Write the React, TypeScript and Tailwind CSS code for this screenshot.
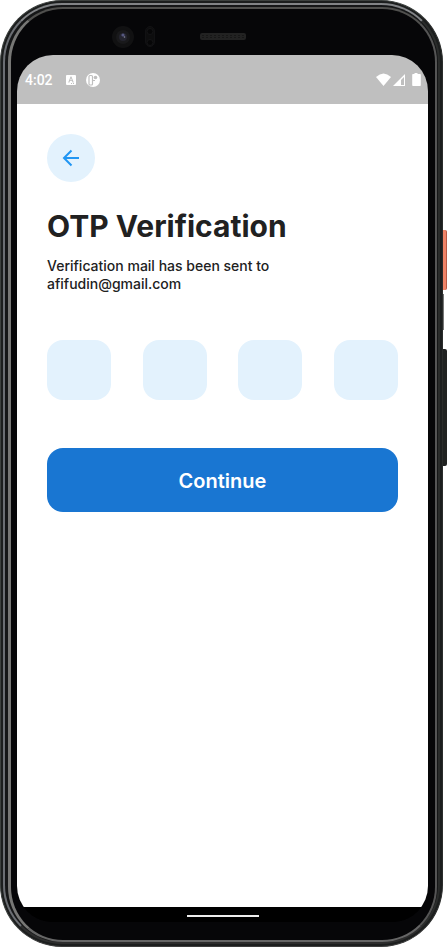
import React from "react";

function Camera() {
  return (
    <svg className="h-6 w-12" viewBox="0 0 48 24" fill="none" aria-hidden="true">
      <circle cx="12" cy="12" r="11" fill="#111112" />
      <circle cx="12" cy="12" r="7" fill="#19191b" />
      <circle cx="12" cy="12" r="4" fill="#25252f" />
      <circle cx="12" cy="10" r="1.6" fill="#55577f" />
      <circle cx="13.500" cy="12" r="0.8" fill="#8b8ca0" />
      <rect x="34.500" y="1.500" width="9" height="20" rx="4.500" fill="#0d0d0e" stroke="#111113" />
      <circle cx="39" cy="6.500" r="3" fill="#060607" stroke="#141416" />
      <circle cx="39" cy="17.500" r="3" fill="#060607" stroke="#141416" />
    </svg>
  );
}

function Speaker() {
  return (
    <svg className="h-[7px] w-[46px]" viewBox="0 0 46 7" aria-hidden="true">
      <rect width="46" height="7" rx="2" fill="#222" />
      <path d="M2 2.500H44M2 4.500H44" stroke="#171717" strokeDasharray="2 2" />
    </svg>
  );
}

function StatusBar() {
  return (
    <div className="flex h-[49px] shrink-0 items-center bg-[#bfbfbf] pr-[7px] pl-2 text-white">
      <span className="font-[Roboto,sans-serif] text-sm font-medium">4:02</span>
      <svg className="ml-3 h-4 w-[38px]" viewBox="0 0 38 16" aria-hidden="true">
        <path
          fill="white"
          fillRule="evenodd"
          d="M2 3h8a1 1 0 0 1 1 1v8a1 1 0 0 1-1 1H2a1 1 0 0 1-1-1V4a1 1 0 0 1 1-1ZM5.600 4.500 3.200 10.500h1.200l.5-1.400h2.200l.5 1.400h1.200L6.400 4.500ZM6 6l.8 2.200H5.200Z"
        />
        <path d="M6 11.500h4" stroke="#bfbfbf" strokeDasharray="1 1" />
        <circle cx="28" cy="8" r="7" fill="white" />
        <rect x="24" y="3.500" width="3.500" height="9.500" rx="1" fill="none" stroke="#bfbfbf" strokeWidth="1.200" />
        <circle cx="30.500" cy="5.500" r="1.800" fill="#bfbfbf" />
        <path d="M28 8.500h2" stroke="#bfbfbf" />
      </svg>
      <svg className="ml-auto h-4 w-[46px]" viewBox="0 0 46 16" fill="white" aria-hidden="true">
        <path d="M1 5Q8.500-2 16 5L8.500 14Z" />
        <path d="M30 2V14H18Z" />
        <path d="M29 5V13H26V8Z" fill="#bfbfbf" />
        <path d="M39.500 1h3v1H45a.8.8 0 0 1 .8.8v10.400a.8.8 0 0 1-.8.8h-7a.8.8 0 0 1-.8-.8V2.800A.8.8 0 0 1 38 2h1.500Z" />
      </svg>
    </div>
  );
}

export default function App() {
  return (
    <div className="relative flex min-h-screen flex-col bg-white pr-1 pb-[2px] font-[Inter,'Liberation_Sans',sans-serif] text-[#212121]">
      <div className="absolute top-[230px] right-0 h-[60px] w-2 rounded-r-xs border-r border-[#b95a45] bg-[#f08468]" />
      <div className="absolute top-[294px] right-[3px] h-9 w-1 bg-[#777]" />
      <div className="absolute top-[349px] right-0 h-[117px] w-2 rounded-r-xs bg-[#202221]" />
      <div className="absolute top-[172px] left-0 h-[713px] w-2 bg-[#3d3d3d]" />

      <div className="relative flex flex-1 flex-col rounded-[62px] border border-t-[#3d413f] border-r-[#2a2c2b] border-b-[#3d3d3d] border-l-[#3d413f] bg-[#1c1e1e] p-[2px]">
        <div className="flex flex-1 flex-col rounded-[59px] border-2 border-t-[#828487] border-r-[#2a2c2b] border-b-[#2d2d2d] border-l-[#6b6e73] bg-[#151617] pt-[2px] pr-[1px] pb-0 pl-[3px]">
          <div className="flex flex-1 flex-col rounded-[55px] border-t-2 border-r-2 border-b-2 border-l-[3px] border-t-[#50504e] border-r-[#555] border-b-[#666] border-l-[#777775] bg-[#060608] pr-[7px] pb-[18px] pl-[6px]">
            <div className="relative flex h-[46px] shrink-0 items-center justify-center">
              <div className="absolute top-4 left-[94px]">
                <Camera />
              </div>
              <div className="pt-2">
                <Speaker />
              </div>
            </div>
            <main className="flex flex-1 flex-col overflow-hidden rounded-t-[36px] rounded-b-[36px] bg-black">
              <StatusBar />
              <form className="flex flex-1 flex-col bg-white px-[30px] pt-[30px]">
                <button
                  type="button"
                  aria-label="Back"
                  className="flex size-12 items-center justify-center rounded-full bg-[#e3f2fd]"
                >
                  <svg className="size-6" viewBox="0 0 24 24" fill="none" stroke="#2196f3" strokeWidth="2" aria-hidden="true">
                    <path d="M20 12H5.500M12.500 4.500 5 12l7.500 7.500" />
                  </svg>
                </button>
                <h1 className="mt-6 text-[30px] leading-10 font-bold whitespace-nowrap">OTP Verification</h1>
                <p className="mt-[11px] text-sm leading-[18px] font-medium">
                  Verification mail has been sent to
                  <br />
                  afifudin@gmail.com
                </p>
                <div className="mt-[47px] flex justify-between">
                  {[1, 2, 3, 4].map((digit) => (
                    <input
                      key={digit}
                      type="text"
                      inputMode="numeric"
                      maxLength={1}
                      aria-label={`Digit ${digit}`}
                      className="h-15 w-16 rounded-2xl bg-[#e3f2fd] text-center text-xl font-semibold outline-none"
                    />
                  ))}
                </div>
                <button type="submit" className="mt-12 h-16 rounded-2xl bg-[#1976d2] pt-[2px] text-xl font-semibold text-white">
                  Continue
                </button>
              </form>
              <div className="flex h-[15px] shrink-0 justify-center bg-black pt-2">
                <div className="h-[2px] w-[72px] bg-[#eee]" />
              </div>
            </main>
          </div>
        </div>
      </div>
    </div>
  );
}
